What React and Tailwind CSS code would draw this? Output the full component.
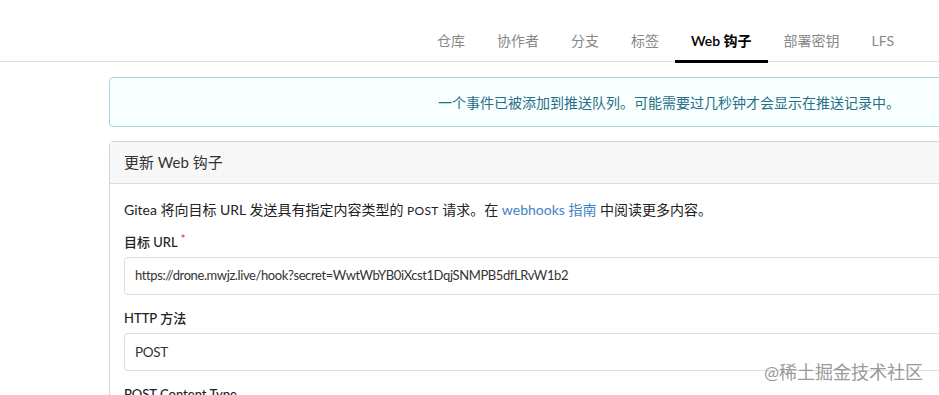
import React from "react";

const font = { fontFamily: 'Lato, "Noto Sans CJK SC", sans-serif' };

function Tab({ label, active }) {
  return (
    <div
      className={
        "px-4 h-[42px] flex items-center text-[14px] border-b-[3px] " +
        (active ? "border-black text-black font-semibold" : "border-transparent text-[#888]")
      }
    >
      {label}
    </div>
  );
}

export default function App() {
  return (
    <div className="relative w-[939px] h-[395px] overflow-hidden bg-white" style={font}>
      <div className="h-[62px] border-b border-[#ddd] flex items-end pl-[421px]">
        <div className="flex -mb-[2px]">
          <Tab label="仓库" />
          <Tab label="协作者" />
          <Tab label="分支" />
          <Tab label="标签" />
          <Tab label="Web 钩子" active />
          <Tab label="部署密钥" />
          <Tab label="LFS" />
        </div>
      </div>

      <div className="pl-[109px] pt-[15px]">
        <div className="w-[1120px] h-[50px] rounded-[4px] border border-[#a9d5de] bg-[#f8ffff] flex items-center justify-center text-[#276f86] text-[14px]">
          一个事件已被添加到推送队列。可能需要过几秒钟才会显示在推送记录中。
        </div>

        <div className="mt-[14px] w-[1120px] border border-[#d4d4d5] rounded-t-[4px]">
          <div className="h-[42px] bg-[#f7f7f7] border-b border-[#dedede] flex items-center px-[14px] text-[15px] text-[#333]">
            更新 Web 钩子
          </div>
          <div className="px-[14px] pt-[15px] text-[14px] text-[#222]">
            <div className="h-[20px] flex items-center">
              <span>
                Gitea 将向目标 URL 发送具有指定内容类型的{" "}
                <span className="text-[12px] tracking-[0.3px]">POST</span> 请求。在{" "}
                <span className="text-[#4183c4]">webhooks 指南</span> 中阅读更多内容。
              </span>
            </div>

            <div className="mt-[14px] h-[20px] flex items-center text-[13px] font-medium text-[#222]">
              目标 URL<span className="text-[#db2828] text-[11px] -mt-[8px] ml-[3px]">*</span>
            </div>
            <div className="mt-[4px] h-[38px] rounded-[4px] border border-[#dedede] flex items-center px-[10px] text-[13px] tracking-[-0.4px] text-[#333]">
              https://drone.mwjz.live/hook?secret=WwtWbYB0iXcst1DqjSNMPB5dfLRvW1b2
            </div>

            <div className="mt-[14px] h-[20px] flex items-center text-[13px] font-medium text-[#222]">
              HTTP 方法
            </div>
            <div className="mt-[4px] h-[38px] rounded-[4px] border border-[#dedede] flex items-center px-[10px] text-[13.5px] tracking-[-0.3px] text-[#333]">
              POST
            </div>

            <div className="mt-[14px] h-[20px] flex items-center text-[13px] font-medium text-[#222]">
              POST Content Type
            </div>
          </div>
        </div>
      </div>

      <div className="absolute left-[764px] top-[360px] text-[18px] text-[#9a9a9a] leading-[24px]">
        @稀土掘金技术社区
      </div>
    </div>
  );
}
